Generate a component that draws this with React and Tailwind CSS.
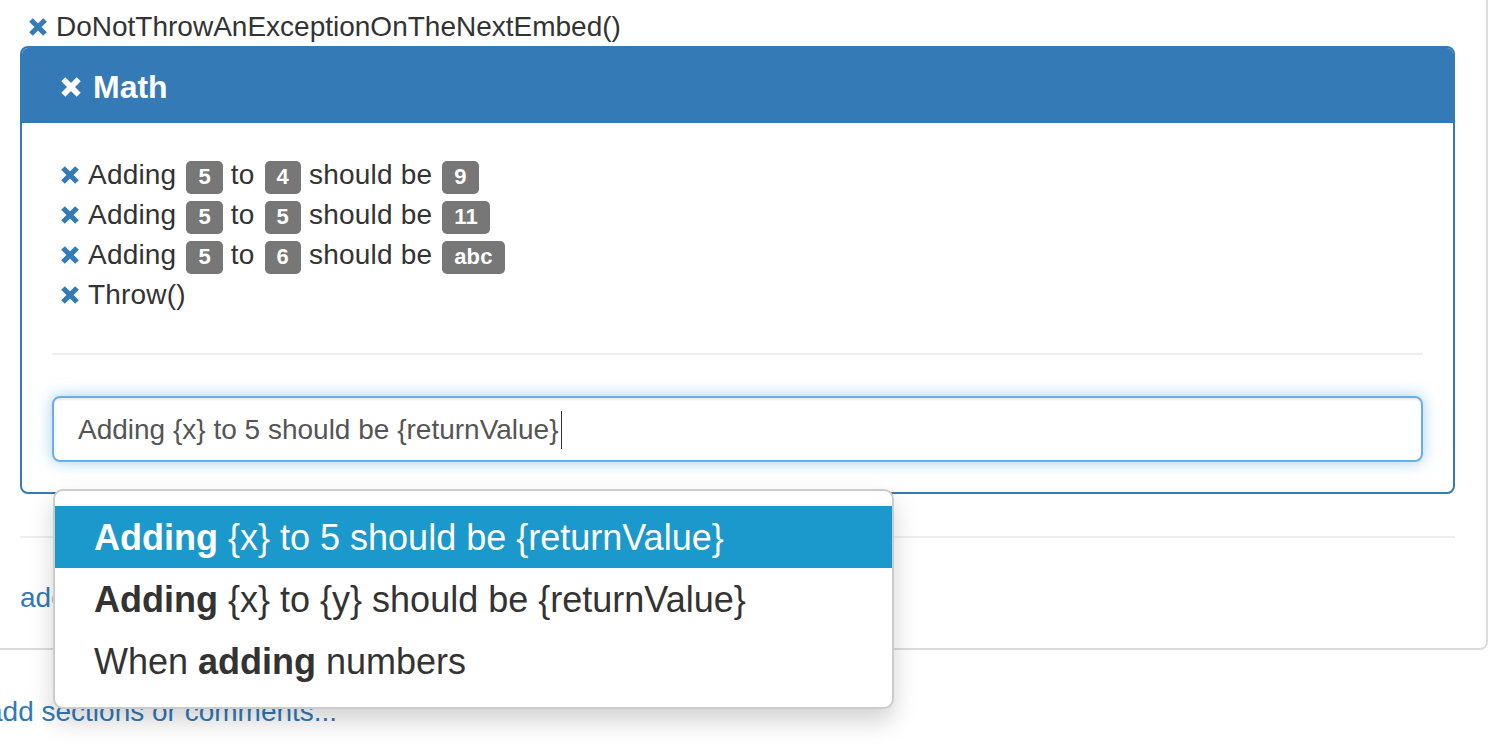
import React from 'react';

function RemoveIcon({ size = 20, color = '#337ab7' }) {
  return (
    <svg width={size} height={size} viewBox="0 0 20 20" className="shrink-0">
      <path d="M3 3 L17 17 M17 3 L3 17" stroke={color} strokeWidth="5.2" strokeLinecap="butt" fill="none" />
    </svg>
  );
}

function Badge({ children }) {
  return (
    <span className="ml-[2px] inline-block align-baseline rounded-[5px] bg-[#777] px-[12px] pt-[5px] pb-[6px] text-[22px] font-bold leading-none text-white">
      {children}
    </span>
  );
}

function TestRow({ children }) {
  return (
    <div className="flex items-center gap-[8px] leading-[40px]">
      <RemoveIcon />
      <span className="tracking-[0.2px]">{children}</span>
    </div>
  );
}

const suggestions = [
  { active: true, parts: [['Adding', true], [' {x} to 5 should be {returnValue}', false]] },
  { active: false, parts: [['Adding', true], [' {x} to {y} should be {returnValue}', false]] },
  { active: false, parts: [['When ', false], ['adding', true], [' numbers', false]] },
];

export default function App() {
  return (
    <div className="relative h-[754px] w-[1504px] overflow-hidden bg-white font-['Liberation_Sans',Arial,sans-serif] text-[28px] text-[#333]">
      <div className="ml-[-20px] w-[1508px] rounded-br-[8px] border-r-2 border-b-2 border-[#ddd] pt-[8px] pr-[31px] pb-[30px] pl-[40px]">
        <div className="flex items-center gap-[8px] pl-[8px] leading-[38px]">
          <RemoveIcon />
          <span>DoNotThrowAnExceptionOnTheNextEmbed()</span>
        </div>

        <div className="rounded-[8px] border-2 border-[#337ab7]">
          <div className="flex h-[75px] items-center gap-[11px] rounded-t-[6px] bg-[#337ab7] pt-[2px] pl-[38px] text-[32px] font-bold text-white">
            <RemoveIcon size={22} color="#fff" />
            <span>Math</span>
          </div>
          <div className="p-[30px]">
            <div className="pt-[2px] pl-[8px]">
              <TestRow>
                Adding <Badge>5</Badge> to <Badge>4</Badge> should be <Badge>9</Badge>
              </TestRow>
              <TestRow>
                Adding <Badge>5</Badge> to <Badge>5</Badge> should be <Badge>11</Badge>
              </TestRow>
              <TestRow>
                Adding <Badge>5</Badge> to <Badge>6</Badge> should be <Badge>abc</Badge>
              </TestRow>
              <TestRow>Throw()</TestRow>
            </div>
            <div className="mt-[38px] border-t-2 border-[#eee]" />
            <div className="mt-[41px] flex h-[66px] items-center rounded-[8px] border-2 border-[#66afe9] px-[24px] pt-[2px] text-[#555] shadow-[inset_0_2px_2px_rgba(0,0,0,0.075),0_0_16px_rgba(102,175,233,0.6)]">
              <span>Adding {'{x}'} to 5 should be {'{returnValue}'}</span>
              <span className="ml-[2px] h-[38px] w-[1px] bg-[#333]" />
            </div>
          </div>
        </div>

        <div className="mt-[42px] border-t-2 border-[#eee]" />
        <div className="mt-[40px] leading-[40px] text-[#337ab7]">add tests or comments...</div>
      </div>

      <div className="mt-[42px] ml-[-13px] leading-[40px] text-[#337ab7]">add sections or comments...</div>

      <div className="absolute top-[489px] left-[53px] w-[841px] rounded-[10px] border-2 border-[#ccc] bg-white pt-[15px] pb-[15px] shadow-[0_12px_24px_rgba(0,0,0,0.175)]">
        {suggestions.map((s, i) => (
          <div
            key={i}
            className={
              s.active
                ? 'flex h-[62px] items-center bg-[#1b98cc] px-[39px] pt-[2px] text-[36px] text-white'
                : 'flex h-[62px] items-center px-[39px] pt-[2px] text-[36px] text-[#333]'
            }
          >
            <span className="whitespace-pre">
              {s.parts.map(([t, bold], j) => (
                <span key={j} className={bold ? 'font-bold' : ''}>
                  {t}
                </span>
              ))}
            </span>
          </div>
        ))}
      </div>
    </div>
  );
}
